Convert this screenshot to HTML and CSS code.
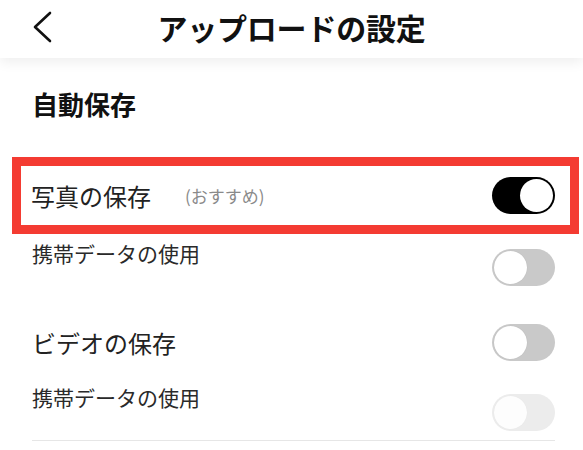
FILE: index.html
```html
<!DOCTYPE html>
<html lang="ja">
<head>
<meta charset="utf-8">
<title>アップロードの設定</title>
<link rel="stylesheet" href="styles.css">
</head>
<body>
<header class="topbar">
  <div class="back">
    <svg width="22" height="32" viewBox="0 0 22 32" aria-hidden="true">
      <path d="M19 2 L4 16 L19 30" fill="none" stroke="#111" stroke-width="2.6" stroke-linecap="round" stroke-linejoin="round"/>
    </svg>
  </div>
  <h1 class="title">アップロードの設定</h1>
  <div class="spacer"></div>
</header>

<main class="content">
  <h2 class="section-title">自動保存</h2>

  <div class="highlight">
    <div class="row main-row">
      <div class="label-wrap">
        <span class="label">写真の保存</span>
        <span class="note">(おすすめ)</span>
      </div>
      <div class="toggle on"><span class="knob"></span></div>
    </div>
  </div>

  <div class="rows">
    <div class="row sub-row first-sub">
      <span class="sublabel">携帯データの使用</span>
      <div class="toggle off"><span class="knob"></span></div>
    </div>
    <div class="row main-row video-row">
      <span class="label">ビデオの保存</span>
      <div class="toggle off"><span class="knob"></span></div>
    </div>
    <div class="row sub-row second-sub">
      <span class="sublabel">携帯データの使用</span>
      <div class="toggle disabled"><span class="knob"></span></div>
    </div>
    <div class="divider"></div>
  </div>
</main>
</body>
</html>
```

FILE: styles.css
```css
* { box-sizing: border-box; }

html, body {
  margin: 0;
  padding: 0;
  background: #ffffff;
}

body {
  font-family: "Noto Sans CJK JP", "Noto Sans", sans-serif;
  color: #222;
  width: 583px;
  height: 450px;
  overflow: hidden;
}

.topbar {
  position: relative;
  z-index: 1;
  height: 58px;
  padding-bottom: 5px;
  display: grid;
  grid-template-columns: 1fr auto 1fr;
  align-items: center;
  background: #fff;
  box-shadow: 0 4px 12px rgba(0, 0, 0, 0.07);
}

.back {
  padding-left: 31px;
  display: flex;
  align-items: center;
}

.back svg { display: block; }

.title {
  margin: 0;
  font-size: 30px;
  line-height: 30px;
  font-weight: 700;
  color: #111;
  letter-spacing: -0.2px;
}

.content {
  padding-top: 33px;
}

.section-title {
  margin: 0 0 40px 32px;
  font-size: 26px;
  line-height: 26px;
  font-weight: 700;
  color: #111;
}

.highlight {
  margin: 0 4px 0 12px;
  border: 9px solid #f43b32;
  height: 77px;
  padding: 0 15px 0 10px;
  display: flex;
  align-items: center;
}

.highlight .row { width: 100%; }

.row {
  display: flex;
  justify-content: space-between;
}

.main-row { align-items: center; }

.label-wrap {
  display: flex;
  align-items: center;
}

.label {
  font-size: 24px;
  line-height: 24px;
  color: #222;
}

.note {
  margin-left: 34px;
  font-size: 17px;
  line-height: 17px;
  color: #8a8a8a;
}

.rows {
  padding: 0 28px 0 32px;
}

.sub-row { align-items: flex-start; }

.sublabel {
  font-size: 21px;
  line-height: 21px;
  color: #2a2a2a;
}

.first-sub { padding-top: 9px; }
.first-sub .toggle { margin-top: 6px; }

.video-row { margin-top: 38px; }

.second-sub { margin-top: 26px; }
.second-sub .toggle { margin-top: 7px; }

.toggle {
  width: 63px;
  height: 37px;
  border-radius: 19px;
  padding: 2px;
  display: flex;
  align-items: center;
}

.knob {
  width: 33px;
  height: 33px;
  border-radius: 50%;
  background: #fff;
}

.toggle.on {
  background: #000;
  justify-content: flex-end;
}

.toggle.off {
  background: #c9c9c9;
  justify-content: flex-start;
}

.toggle.off .knob {
  box-shadow: 0 0 1px rgba(0, 0, 0, 0.15);
}

.toggle.disabled {
  background: #ececec;
  justify-content: flex-start;
}

.toggle.disabled .knob {
  background: #fdfdfd;
  box-shadow: 0 0 1px rgba(0, 0, 0, 0.06);
}

.divider {
  margin-top: 9px;
  height: 1px;
  background: #e6e6e6;
}
```
